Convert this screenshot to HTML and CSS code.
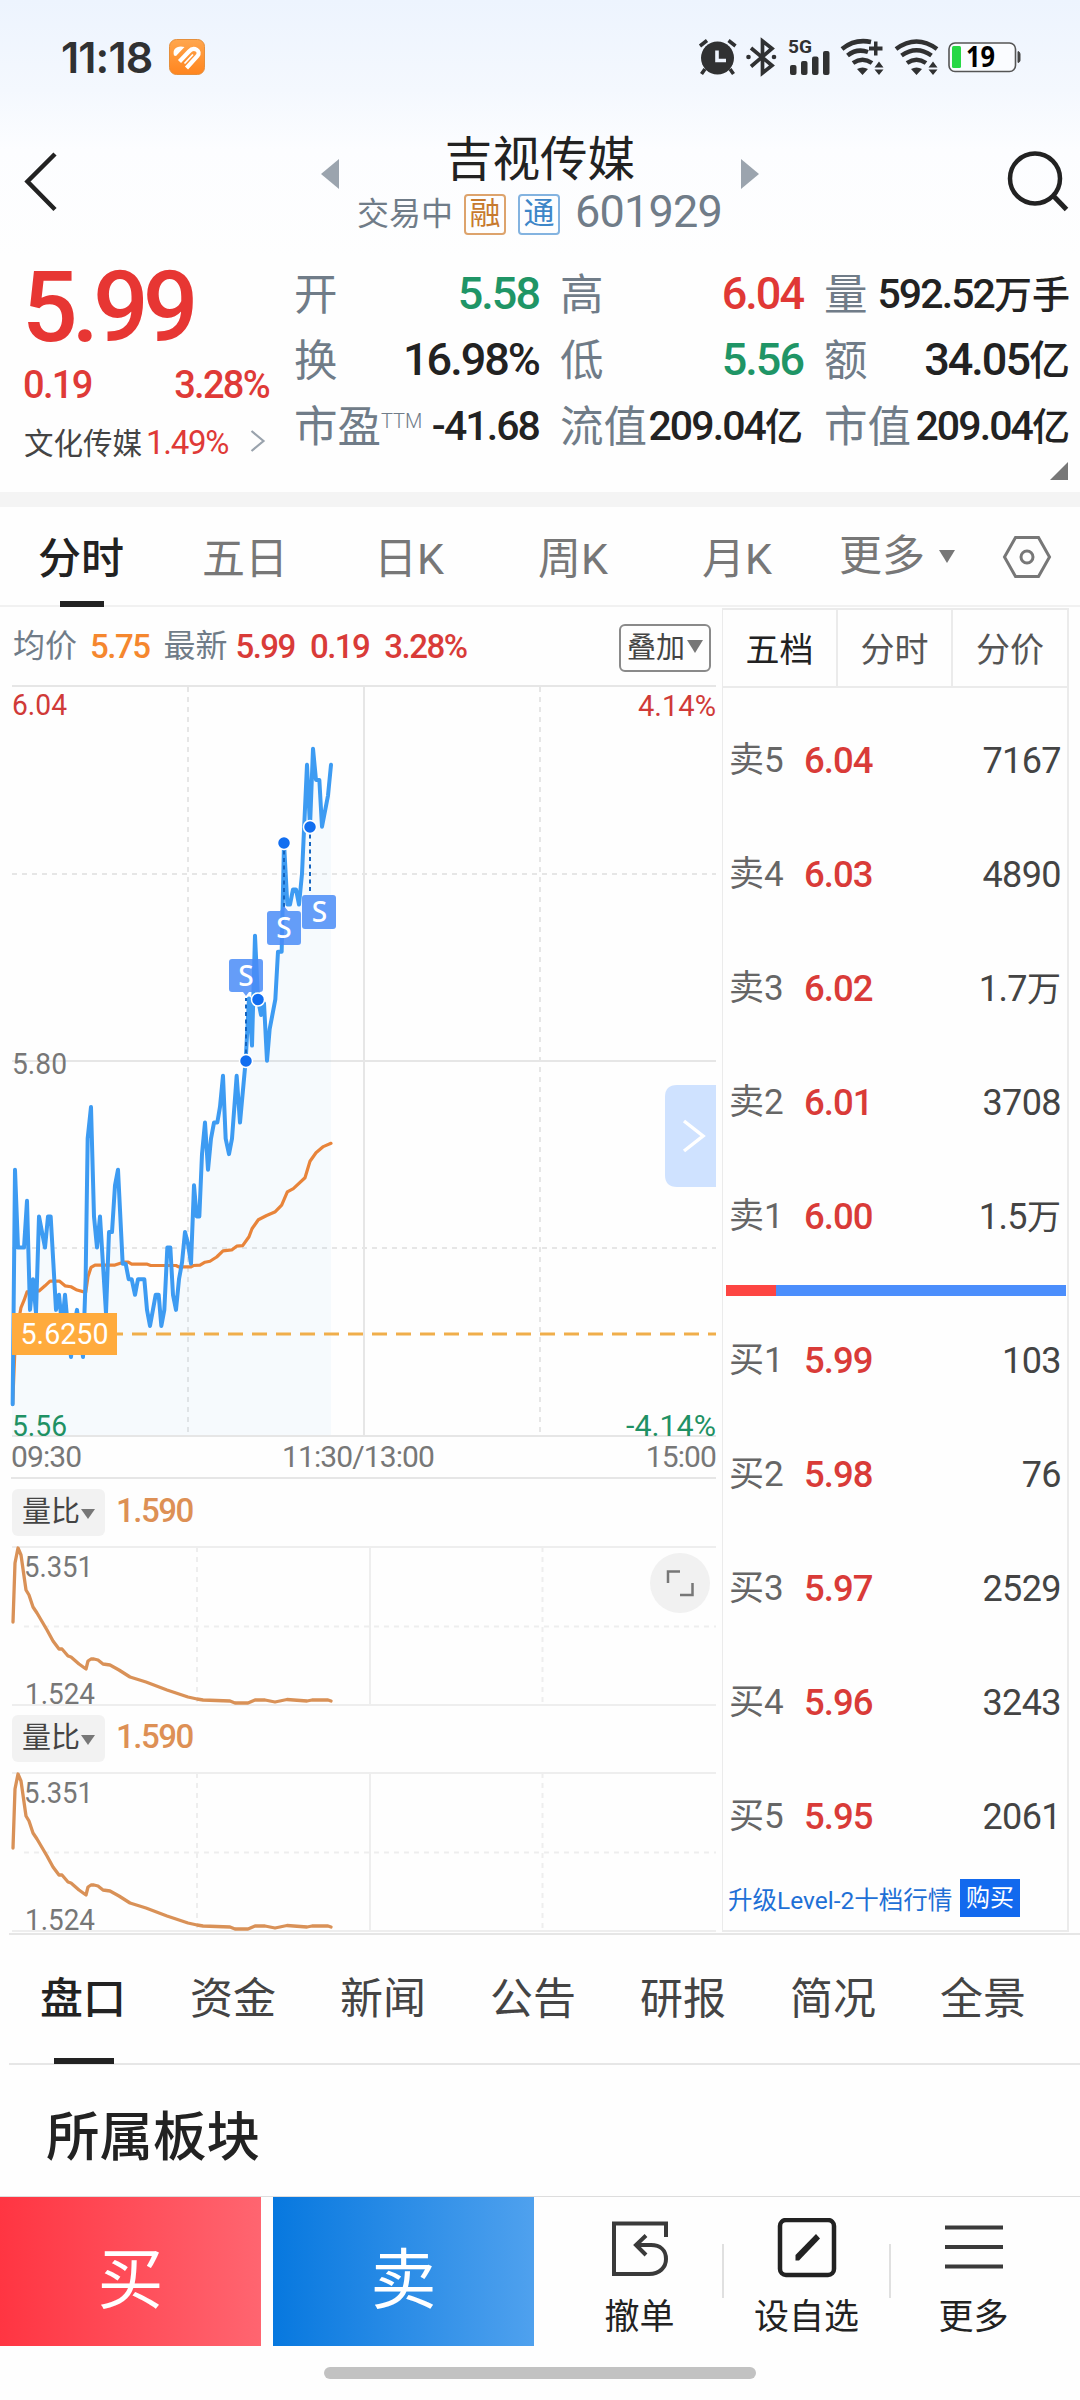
FILE: index.html
```html
<!DOCTYPE html>
<html lang="zh-CN">
<head>
<meta charset="utf-8">
<title>吉视传媒 601929</title>
<link rel="stylesheet" href="styles.css">
</head>
<body>
<div class="screen">
  <div class="status">
    <span class="clock">11:18</span>
    <svg class="app-badge" width="36" height="36" viewBox="0 0 36 36">
      <defs><linearGradient id="badge" x1="0" y1="0" x2="0" y2="1"><stop offset="0" stop-color="#ffa64d"/><stop offset="1" stop-color="#ff851f"/></linearGradient></defs>
      <rect x=".5" y=".5" width="35" height="35" rx="7" fill="url(#badge)" stroke="#e58f3c"/>
      <path d="M5 16.500C3 10 8 6 15.500 8L7 17Z" fill="#fff"/>
      <path d="M10.500 22.500 20 12.500C25 7 32.500 12 28.500 17L17.500 29" fill="none" stroke="#fff" stroke-width="4.200"/>
      <path d="M15.500 24.500 24 15.500" stroke="#fff" stroke-width="1.800"/>
    </svg>
    <svg class="status-icons" width="324" height="40" viewBox="698 37 324 40">
      <g fill="#303132">
        <circle cx="717.500" cy="58" r="16.500"/>
        <path d="M700 46 707 40.500M735.500 46 728.500 40.500M705 69 701.500 74M730 69 733.500 74" stroke="#303132" stroke-width="3.600"/>
        <path d="M717 50.500V60.500H726" fill="none" stroke="#eef4fd" stroke-width="3.600"/>
        <path d="M751 48 772 65.500 762.500 73V41L772 48.500 751 66.500" fill="none" stroke="#303132" stroke-width="3.700"/>
        <circle cx="748.500" cy="57" r="2.300"/><circle cx="774" cy="57" r="2.300"/>
        <text x="788" y="53" font-family="Roboto" font-weight="700" font-size="18" textLength="24" lengthAdjust="spacingAndGlyphs">5G</text>
        <rect x="790" y="65" width="6.500" height="10" rx="2"/><rect x="801" y="61" width="6.500" height="14" rx="2"/><rect x="812" y="56.500" width="6.500" height="18.500" rx="2"/><rect x="823" y="51" width="6.500" height="24" rx="2"/>
      </g>
      <g>
        <path d="M896 49Q916.500 34 937 49M901.500 55.500Q916.500 45 931.500 55.500M907 63Q916.500 56.500 926 63" fill="none" stroke="#303132" stroke-width="4.500"/>
        <path d="M911 69Q916.500 66 922 69L916.500 75ZM928.500 67.500H937.500L933 61.500ZM928.500 69.500H937.500L933 75Z" fill="#303132"/>
      </g>
      <g>
        <path d="M842 49Q855 38.500 871 42M847.500 55.500Q857 48 868 52M853 63Q862.500 56.500 872 63" fill="none" stroke="#303132" stroke-width="4.500"/>
        <path d="M857 69Q862.500 66 868 69L862.500 75ZM874.500 67.500H883.500L879 61.500ZM874.500 69.500H883.500L879 75ZM869 46.500H874V41.500H877.500V46.500H882.500V50.500H877.500V55.500H874V50.500H869Z" fill="#303132"/>
      </g>
      <rect x="949" y="43" width="66.500" height="28.500" rx="6" fill="#fafcff" stroke="#555" stroke-width="1.600"/>
      <rect x="952" y="46" width="9" height="22" rx="1.500" fill="#27d845"/>
      <path d="M1018 51.500Q1020 52 1020 54V60.500Q1020 62 1018 62.500Z" fill="#444" stroke="#444"/>
      <text x="966" y="67" font-family="Open Sans" font-weight="700" font-size="28" textLength="29" lengthAdjust="spacingAndGlyphs">19</text>
    </svg>
  </div>

  <header class="header">
    <svg class="back" width="40" height="64" viewBox="0 0 40 64"><path d="M33 4 5.500 31.500 33 59.500" fill="none" stroke="#222" stroke-width="4.500"/></svg>
    <div class="title-block">
      <div class="title-row">
        <i class="tri left"></i><h1>吉视传媒</h1><i class="tri right"></i>
      </div>
      <div class="sub-row">
        <span class="state">交易中</span><span class="tag orange">融</span><span class="tag blue">通</span><span class="code">601929</span>
      </div>
    </div>
    <svg class="search" width="64" height="64" viewBox="0 0 64 64"><circle cx="29" cy="28.500" r="25" fill="none" stroke="#222" stroke-width="4.500"/><path d="M47.500 46 60.500 59.500" stroke="#222" stroke-width="5"/></svg>
  </header>

  <section class="quote">
    <div class="price-block">
      <div class="price">5.99</div>
      <div class="delta"><span>0.19</span><span>3.28%</span></div>
      <div class="sector"><span>文化传媒</span><b>1.49%</b><svg width="16" height="24" viewBox="0 0 16 24"><path d="M1.500 2 13.500 12 1.500 22" fill="none" stroke="#9aa3ad" stroke-width="2.200"/></svg></div>
    </div>
    <dl class="stats">
      <div><dt>开</dt><dd class="down">5.58</dd></div>
      <div><dt>高</dt><dd class="up">6.04</dd></div>
      <div><dt>量</dt><dd class="small">592.52<em>万手</em></dd></div>
      <div><dt>换</dt><dd>16.98%</dd></div>
      <div><dt>低</dt><dd class="down">5.56</dd></div>
      <div><dt>额</dt><dd>34.05<em>亿</em></dd></div>
      <div><dt>市盈<sup>TTM</sup></dt><dd class="small">-41.68</dd></div>
      <div><dt>流值</dt><dd class="small">209.04<em>亿</em></dd></div>
      <div><dt>市值</dt><dd class="small">209.04<em>亿</em></dd></div>
    </dl>
    <i class="fold"></i>
  </section>

  <nav class="periods">
    <span class="on">分时</span><span>五日</span><span>日K</span><span>周K</span><span>月K</span>
    <span class="more">更多<i class="caret"></i></span>
    <svg width="50" height="46" viewBox="0 0 50 46"><path d="M2.500 23 13.500 3.500H36.500L47.500 23 36.500 42.500H13.500Z" fill="none" stroke="#777" stroke-width="3"/><circle cx="25" cy="23" r="6" fill="none" stroke="#777" stroke-width="3"/></svg>
  </nav>

  <main class="market">
    <div class="charts">
      <div class="legend">
        <span class="name">均价</span><b class="avg">5.75</b><span class="name last">最新</span><b>5.99</b><b>0.19</b><b>3.28%</b>
        <span class="overlay">叠加<i class="caret"></i></span>
      </div>
      <svg class="chart" width="716" height="750" viewBox="0 0 716 750">
        <g fill="none" stroke="#e6e6e6" stroke-width="2">
          <path d="M12 0H716M364 0V750M12 375H716M12 750H716"/>
          <path d="M188 1V750M540 1V750M12 188H716M12 562H716" stroke-dasharray="5 5"/>
        </g>
        <g transform="translate(0 34) scale(.33333 .4719)">
          <path fill="#3d9bf2" fill-opacity=".045" d="M36 1515V1450L45 953 54 1118 72 1118 81 1019 90 1250 99 1185 108 1257 117 1052 135 1118 144 1052 152 1052 168 1250 186 1284 213 1350 231 1250 249 1350 257 1180 263 887 273 820 282 1052 291 1118 300 1052 318 1257 327 1085 336 1085 345 986 354 953 368 1152 405 1218 433 1185 450 1284 467 1218 484 1284 502 1118 511 1118 528 1250 555 1085 573 1152 582 986 598 1052 615 853 624 953 642 853 669 754 687 920 710 754 720 853 737 722 747 590 756 690 765 457 783 625 801 722 809 655 826 592 834 491 845 491 852 260 862 391 888 359 897 391 921 95 930 226 939 61 966 226 993 95V1515Z"/>
          <polyline class="line avg-line" points="38,1450 45,1330 54,1280 63,1245 72,1230 81,1212 117,1210 135,1199 150,1189 178,1189 195,1199 213,1201 231,1208 257,1213 264,1180 273,1160 285,1155 345,1155 370,1149 385,1149 395,1153 440,1153 452,1156 528,1156 537,1159 573,1159 580,1156 600,1155 615,1149 630,1147 650,1138 669,1125 695,1123 710,1115 728,1114 747,1095 756,1078 775,1059 800,1050 826,1042 845,1028 862,1000 880,993 915,970 930,935 948,917 970,904 993,897"/>
          <polyline class="line price-line" points="38,1450 45,953 54,1118 72,1118 81,1019 90,1250 99,1185 108,1257 117,1052 135,1118 144,1052 152,1052 160,1150 168,1250 177,1218 186,1284 195,1218 204,1290 213,1350 222,1284 231,1250 240,1300 249,1350 257,1180 263,887 273,820 282,1052 291,1118 300,1052 318,1257 327,1085 336,1085 345,986 354,953 368,1152 377,1152 386,1185 395,1185 405,1218 414,1185 433,1185 441,1250 450,1284 467,1218 476,1218 484,1284 493,1250 502,1118 511,1118 519,1218 528,1250 537,1185 546,1150 555,1085 564,1110 573,1152 582,986 590,1052 598,1052 606,920 615,853 624,953 633,887 642,853 652,853 660,820 669,754 677,887 687,920 696,887 710,754 720,853 737,722 747,590 756,690 765,457 774,592 783,625 792,600 801,722 809,655 826,592 834,491 845,491 852,260 862,391 870,391 879,359 888,359 897,391 906,326 921,95 930,226 939,61 948,127 958,127 966,226 984,160 993,95"/>
        </g>
        <path d="M246 375V312M284 157V222M310 141V207" stroke="#1565c0" stroke-width="2" stroke-dasharray="4 3.500"/>
        <g fill="#126ef0" stroke="#fff" stroke-width="1.500"><circle cx="246" cy="375" r="6.500"/><circle cx="258" cy="313.500" r="6.500"/><circle cx="284" cy="157" r="6.500"/><circle cx="310" cy="141" r="6.500"/></g>
        <g fill="#4a8cf7" fill-opacity=".85">
          <path d="M232 273H260Q263 273 263 276V303Q263 306 260 306H249L246 310 243 306H232Q229 306 229 303V276Q229 273 232 273Z"/>
          <path d="M270 225H280L284 220 288 225H298Q301 225 301 228V256Q301 259 298 259H270Q267 259 267 256V228Q267 225 270 225Z"/>
          <rect x="302" y="209" width="34" height="34" rx="3"/>
        </g>
        <g class="flag"><text x="246" y="300">S</text><text x="284" y="252">S</text><text x="319.500" y="236">S</text></g>
        <path d="M117 648H716" stroke="#f0ae4b" stroke-width="3" stroke-dasharray="15 9" stroke-dashoffset="9"/>
        <rect x="12" y="627" width="105" height="42" fill="#ffab3d"/>
        <g class="num">
          <text x="20.500" y="658" fill="#fff" textLength="88" lengthAdjust="spacingAndGlyphs">5.6250</text>
          <text x="12" y="29" fill="#d03a38" textLength="55" lengthAdjust="spacingAndGlyphs">6.04</text>
          <text x="638" y="30" fill="#d03a38" textLength="78" lengthAdjust="spacingAndGlyphs">4.14%</text>
          <text x="12" y="388" fill="#777" textLength="55" lengthAdjust="spacingAndGlyphs">5.80</text>
          <text x="12" y="750" fill="#1f9164" textLength="55" lengthAdjust="spacingAndGlyphs">5.56</text>
          <text x="626" y="750" fill="#1f9164" textLength="90" lengthAdjust="spacingAndGlyphs">-4.14%</text>
        </g>
        <path d="M716 399V501H677Q665 501 665 489V411Q665 399 677 399Z" fill="#cfe2ff"/>
        <path d="M684 435 703 450 684 465" fill="none" stroke="#fff" stroke-width="3.500"/>
      </svg>
      <div class="times"><span>09:30</span><span>11:30/13:00</span><span>15:00</span></div>

      <div class="ratio-head"><span class="pick">量比<i class="caret"></i></span><b>1.590</b></div>
      <svg class="chart" width="716" height="158" viewBox="0 0 716 158">
        <g id="ratio">
          <g fill="none" stroke="#eee" stroke-width="2"><path d="M12 0H716M370 0V158M12 158H716"/><path d="M197 0V158M542.500 0V158M24 79.500H716" stroke-dasharray="5 5"/></g>
          <polyline class="line ratio-line" points="13,75 15,16 18,1 21,8 26,43 29,48 33,60 37,66 47,83 53,94 59,102 62,102 68,109 71,110 79,117 86,122 88,114 91,112 94,112 98,113 103,117 110,118 119,123 130,130 146,135 167,143 188,150 197,152 203,153 230,154 235,156 248,156 255,153 265,153 275,155 287,152.500 307,154 312,153 328,153 331,154"/>
          <g class="num" fill="#777"><text x="24" y="30" textLength="69" lengthAdjust="spacingAndGlyphs">5.351</text><text x="25" y="157" textLength="70" lengthAdjust="spacingAndGlyphs">1.524</text></g>
        </g>
        <circle cx="680" cy="36" r="30" fill="#f1f1f1"/>
        <path d="M668 36V24.500H680M692.500 36V48H680" fill="none" stroke="#777" stroke-width="2.500"/>
      </svg>
      <div class="ratio-head"><span class="pick">量比<i class="caret"></i></span><b>1.590</b></div>
      <svg class="chart" width="716" height="159" viewBox="0 0 716 159"><use href="#ratio"/></svg>
    </div>

    <aside class="book">
      <div class="book-tabs"><span class="on">五档</span><span>分时</span><span>分价</span></div>
      <div class="levels asks">
        <p><span>卖5</span><b>6.04</b><i>7167</i></p>
        <p><span>卖4</span><b>6.03</b><i>4890</i></p>
        <p><span>卖3</span><b>6.02</b><i>1.7<em>万</em></i></p>
        <p><span>卖2</span><b>6.01</b><i>3708</i></p>
        <p><span>卖1</span><b>6.00</b><i>1.5<em>万</em></i></p>
      </div>
      <div class="balance"><i></i></div>
      <div class="levels bids">
        <p><span>买1</span><b>5.99</b><i>103</i></p>
        <p><span>买2</span><b>5.98</b><i>76</i></p>
        <p><span>买3</span><b>5.97</b><i>2529</i></p>
        <p><span>买4</span><b>5.96</b><i>3243</i></p>
        <p><span>买5</span><b>5.95</b><i>2061</i></p>
      </div>
      <div class="upgrade"><span>升级Level-2十档行情</span><b>购买</b></div>
    </aside>
  </main>

  <nav class="sections">
    <span class="on">盘口</span><span>资金</span><span>新闻</span><span>公告</span><span>研报</span><span>简况</span><span>全景</span>
  </nav>
  <h2 class="block-title">所属板块</h2>

  <footer class="actions">
    <button class="buy">买</button>
    <button class="sell">卖</button>
    <div class="tools">
      <div class="tool">
        <svg width="60" height="60" viewBox="0 0 60 60"><path d="M56 19V5.500H4V56H39C50 56 56 49 56 41C56 32 50 27 41 27H27" fill="none" stroke="#3a3a3a" stroke-width="4"/><path d="M36 17.500 26 27 36 37" fill="none" stroke="#3a3a3a" stroke-width="4"/></svg>
        <span>撤单</span>
      </div>
      <div class="tool">
        <svg width="60" height="60" viewBox="0 0 60 60"><rect x="3" y="2" width="54" height="55" rx="6" fill="none" stroke="#222" stroke-width="4.500"/><path d="M18.500 42.500V37L39 16 43 20.500 22 42.500Z" fill="#222"/></svg>
        <span>设自选</span>
      </div>
      <div class="tool">
        <svg width="60" height="60" viewBox="0 0 60 60"><path d="M1 9.500H59M1 29H59M1 48.500H59" stroke="#3a3a3a" stroke-width="4"/></svg>
        <span>更多</span>
      </div>
    </div>
  </footer>
  <div class="home"><i></i></div>
</div>
</body>
</html>
```
FILE: styles.css
```css
* { box-sizing: border-box; margin: 0; padding: 0; }
body { width: 1080px; background: #fff; color: #222; font-family: Roboto, "Noto Sans CJK SC", sans-serif; }
i, em { font-style: normal; }
svg { display: block; flex: none; }
.screen { width: 1080px; height: 2400px; display: flex; flex-direction: column; overflow: hidden; background: linear-gradient(#edf4fe 0, #f4f8fe 90px, #fcfdff 150px, #fefefe 260px); }
.screen > * { flex: none; }

.status { height: 112px; display: flex; align-items: flex-start; padding: 37px 58px 0 61px; }
.clock { font: 600 43px/40px Inter, sans-serif; color: #303132; width: 108px; letter-spacing: -.9px; }
.app-badge { margin-top: 1.5px; }
.status-icons { margin-left: auto; overflow: visible; }

.header { height: 138px; display: flex; justify-content: space-between; padding: 0 10px 0 22px; }
.back { margin-top: 38px; }
.search { margin: 38px 0 0; }
.title-block { width: 438px; margin: 19px 0 0 12px; }
.title-row { display: flex; justify-content: space-between; align-items: flex-start; }
.title-row h1 { font-size: 47.600px; line-height: 58px; font-weight: 400; }
.tri { margin-top: 28px; border: 15px solid transparent; }
.tri.left { border-left: 0; border-right: 18px solid #9ba4ae; }
.tri.right { border-right: 0; border-left: 18px solid #9ba4ae; }
.sub-row { display: flex; align-items: center; height: 42px; margin-top: 4px; padding-left: 36px; color: #707c88; }
.state { font-size: 32px; line-height: 42px; width: 107px; }
.tag { width: 42px; height: 41px; border: 2px solid; border-radius: 4px; font-size: 31px; line-height: 36px; text-align: center; margin-right: 12px; }
.tag.orange { color: #c77a2e; border-color: #dda36c; }
.tag.blue { color: #3d86c8; border-color: #83b3e0; margin-right: 15px; }
.code { font-size: 45px; line-height: 38px; height: 42px; letter-spacing: -.8px; }

.quote { height: 257px; padding-top: 13px; display: flex; position: relative; border-bottom: 15px solid #f4f4f4; }
.price-block { width: 294px; padding-left: 24px; color: #df3a37; font-weight: 500; }
.price { font-size: 98px; line-height: 90px; letter-spacing: -6px; color: #e73633; margin-left: -2px; }
.delta { width: 246px; display: flex; justify-content: space-between; font-size: 38px; line-height: 46px; letter-spacing: -1.7px; margin: 9px 0 0 -1px; }
.sector { display: flex; align-items: center; height: 40px; margin-top: 13px; color: #444; font-size: 29.5px; font-weight: 400; }
.sector b { font-size: 33px; font-weight: 400; color: #df3a37; letter-spacing: -1.3px; margin: 2px 0 0 4px; width: 104px; }
.stats { width: 774px; display: grid; grid-template-columns: 245px 243px 246px; column-gap: 21px; grid-auto-rows: 66px; align-content: start; }
.stats div { display: flex; justify-content: space-between; align-items: center; line-height: 66px; white-space: nowrap; }
dt { font-size: 43.5px; color: #707c88; height: 66px; }
dt sup { display: inline-block; vertical-align: 14px; line-height: 20px; font-size: 20px; font-weight: 300; }
dd { font-size: 45px; font-weight: 500; letter-spacing: -2px; height: 66px; margin-top: -4px; }
dd em { font-size: 41px; letter-spacing: 0; }
dd.small { font-size: 41px; letter-spacing: -1.9px; }
dd.small em { font-size: 38px; }
.up { color: #e03835; }
.down { color: #1f9566; }
.fold { position: absolute; right: 12px; bottom: 12px; border: 9px solid #777; border-left-color: transparent; border-top-color: transparent; }

.periods { height: 100px; display: flex; border-bottom: 2px solid #f1f1f1; font-size: 43px; line-height: 104px; color: #777; padding-left: 38px; }
.periods > span { width: 164px; position: relative; }
.periods > span:nth-child(3) { width: 172px; padding-left: 8px; }
.periods > span:nth-child(5) { width: 137px; }
.periods .on, .sections .on { color: #222; font-weight: 500; }
.periods .on::after { content: ""; position: absolute; left: 22px; bottom: -2px; width: 44px; height: 6px; background: #222; }
.periods .more { display: flex; align-items: center; width: 163px; white-space: nowrap; }
.caret { display: inline-block; border: 8px solid transparent; border-top: 13px solid #777; border-bottom: 0; }
.more .caret { margin-left: 14px; }
.periods svg { margin-top: 27px; }

.market { height: 1326px; display: flex; }
.charts { width: 716px; display: flex; flex-direction: column; }
.legend { height: 79px; display: flex; align-items: center; padding: 0 5px 0 13px; font-size: 32px; line-height: 46px; white-space: nowrap; }
.legend .name { color: #707c88; width: 77px; margin-top: -2px; }
.legend .last { margin-left: 6px; width: 72px; }
.legend b { font-size: 33px; font-weight: 500; color: #d93b38; letter-spacing: -1.5px; margin-right: 15px; }
.legend b.avg { color: #f5872e; margin-right: 8px; }
.overlay { margin-left: auto; width: 92px; height: 48px; margin-top: 3px; border: 2px solid #8a8a8a; border-radius: 6px; display: flex; align-items: center; justify-content: center; font-size: 29px; line-height: 44px; color: #444; }
.overlay .caret { margin: -4px 0 0 2px; }
.chart { overflow: visible; }
.line { fill: none; vector-effect: non-scaling-stroke; stroke-linejoin: round; stroke-linecap: round; }
.price-line { stroke: #3d9bf2; stroke-width: 4px; }
.avg-line { stroke: #e8843a; stroke-width: 3.200px; }
.ratio-line { stroke: #d99157; stroke-width: 3.300px; }
.num { font-size: 30px; }
.flag { font: 500 28px "Noto Sans", sans-serif; fill: #fff; text-anchor: middle; }
.times { height: 43px; margin-left: 11px; display: flex; justify-content: space-between; font-size: 30px; line-height: 42px; color: #777; border-bottom: 2px solid #e6e6e6; letter-spacing: -.9px; }
.times span:nth-child(2) { margin-left: -11px; }
.ratio-head { height: 68px; padding: 10px 0 0 12px; display: flex; }
.pick { width: 93px; height: 47px; background: #f2f2f2; border-radius: 6px; color: #444; font-size: 29px; line-height: 45px; padding-left: 10px; display: flex; align-items: center; }
.pick .caret { border-width: 10px 7px 0; margin: 3px 0 0 1px; }
.ratio-head b { margin-left: 11px; font-size: 33px; line-height: 44px; font-weight: 500; color: #dd9055; letter-spacing: -1.500px; }

.book { width: 347px; height: 1324px; margin: 1px 0 0 6px; border: 2px solid #ebebeb; border-left-width: 1px; }
.book-tabs { height: 78px; display: grid; grid-template-columns: 113px 115px 1fr; border-bottom: 2px solid #ebebeb; }
.book-tabs span { height: 76px; text-align: center; font-size: 34px; line-height: 80px; color: #555; border-left: 2px solid #ebebeb; }
.book-tabs span:first-child { border: 0; color: #222; }
.levels p { height: 114px; display: flex; align-items: center; padding: 0 6px 0 6px; font-size: 36px; line-height: 50px; }
.asks { padding-top: 16px; }
.bids { padding-top: 8px; height: 578px; }
.levels span { width: 75px; color: #666; font-size: 35px; font-weight: 400; }
.levels b { color: #d93b38; font-weight: 500; letter-spacing: -1px; font-size: 36.500px; }
.levels i { margin-left: auto; color: #444; letter-spacing: -.6px; }
.levels em { font-size: 34px; letter-spacing: 0; }
.balance { height: 11px; margin: 11px 1px 0 3px; background: #4b8efc; }
.balance i { display: block; width: 50px; height: 11px; background: #fd4542; }
.upgrade { display: flex; align-items: center; height: 38px; margin-top: 5px; padding-left: 5px; color: #1f70d6; font-size: 24.500px; white-space: nowrap; }
.upgrade span { width: 232px; }
.upgrade b { width: 60px; height: 38px; background: #1269ee; color: #fff; font-weight: 400; font-size: 24px; line-height: 38px; text-align: center; }

.sections { height: 132px; margin-left: 9px; display: flex; padding-left: 31px; border-top: 2px solid #e6e6e6; border-bottom: 2px solid #e6e6e6; font-size: 43px; line-height: 129px; color: #444; }
.sections span { width: 150px; position: relative; flex: none; }
.sections .on::after { content: ""; position: absolute; left: 14px; bottom: -1px; width: 60px; height: 6px; background: #222; }
.block-title { height: 131px; padding-left: 46px; font-size: 53.500px; font-weight: 500; line-height: 145px; }
.actions { height: 150px; border-top: 1px solid #ddd; display: flex; gap: 12px; }
.actions button { width: 261px; border: 0; color: #fff; font: 400 66px/150px Roboto, "Noto Sans CJK SC", sans-serif; padding-top: 9px; }
.buy { background: linear-gradient(90deg, #ff3542, #ff6570); }
.sell { background: linear-gradient(90deg, #0778df, #4fa1ee); }
.tools { display: flex; margin-left: 10px; }
.tool { width: 167px; display: flex; flex-direction: column; align-items: center; padding-top: 21px; font-size: 35px; line-height: 52px; position: relative; }
.tool span { margin-top: 14px; white-space: nowrap; }
.tool + .tool::before { content: ""; position: absolute; left: -1px; top: 47px; width: 2px; height: 54px; background: #e0e0e0; }
.home { height: 54px; padding-top: 21px; }
.home i { display: block; margin: 0 auto; width: 432px; height: 12px; border-radius: 6px; background: #c2c2c2; }
```
